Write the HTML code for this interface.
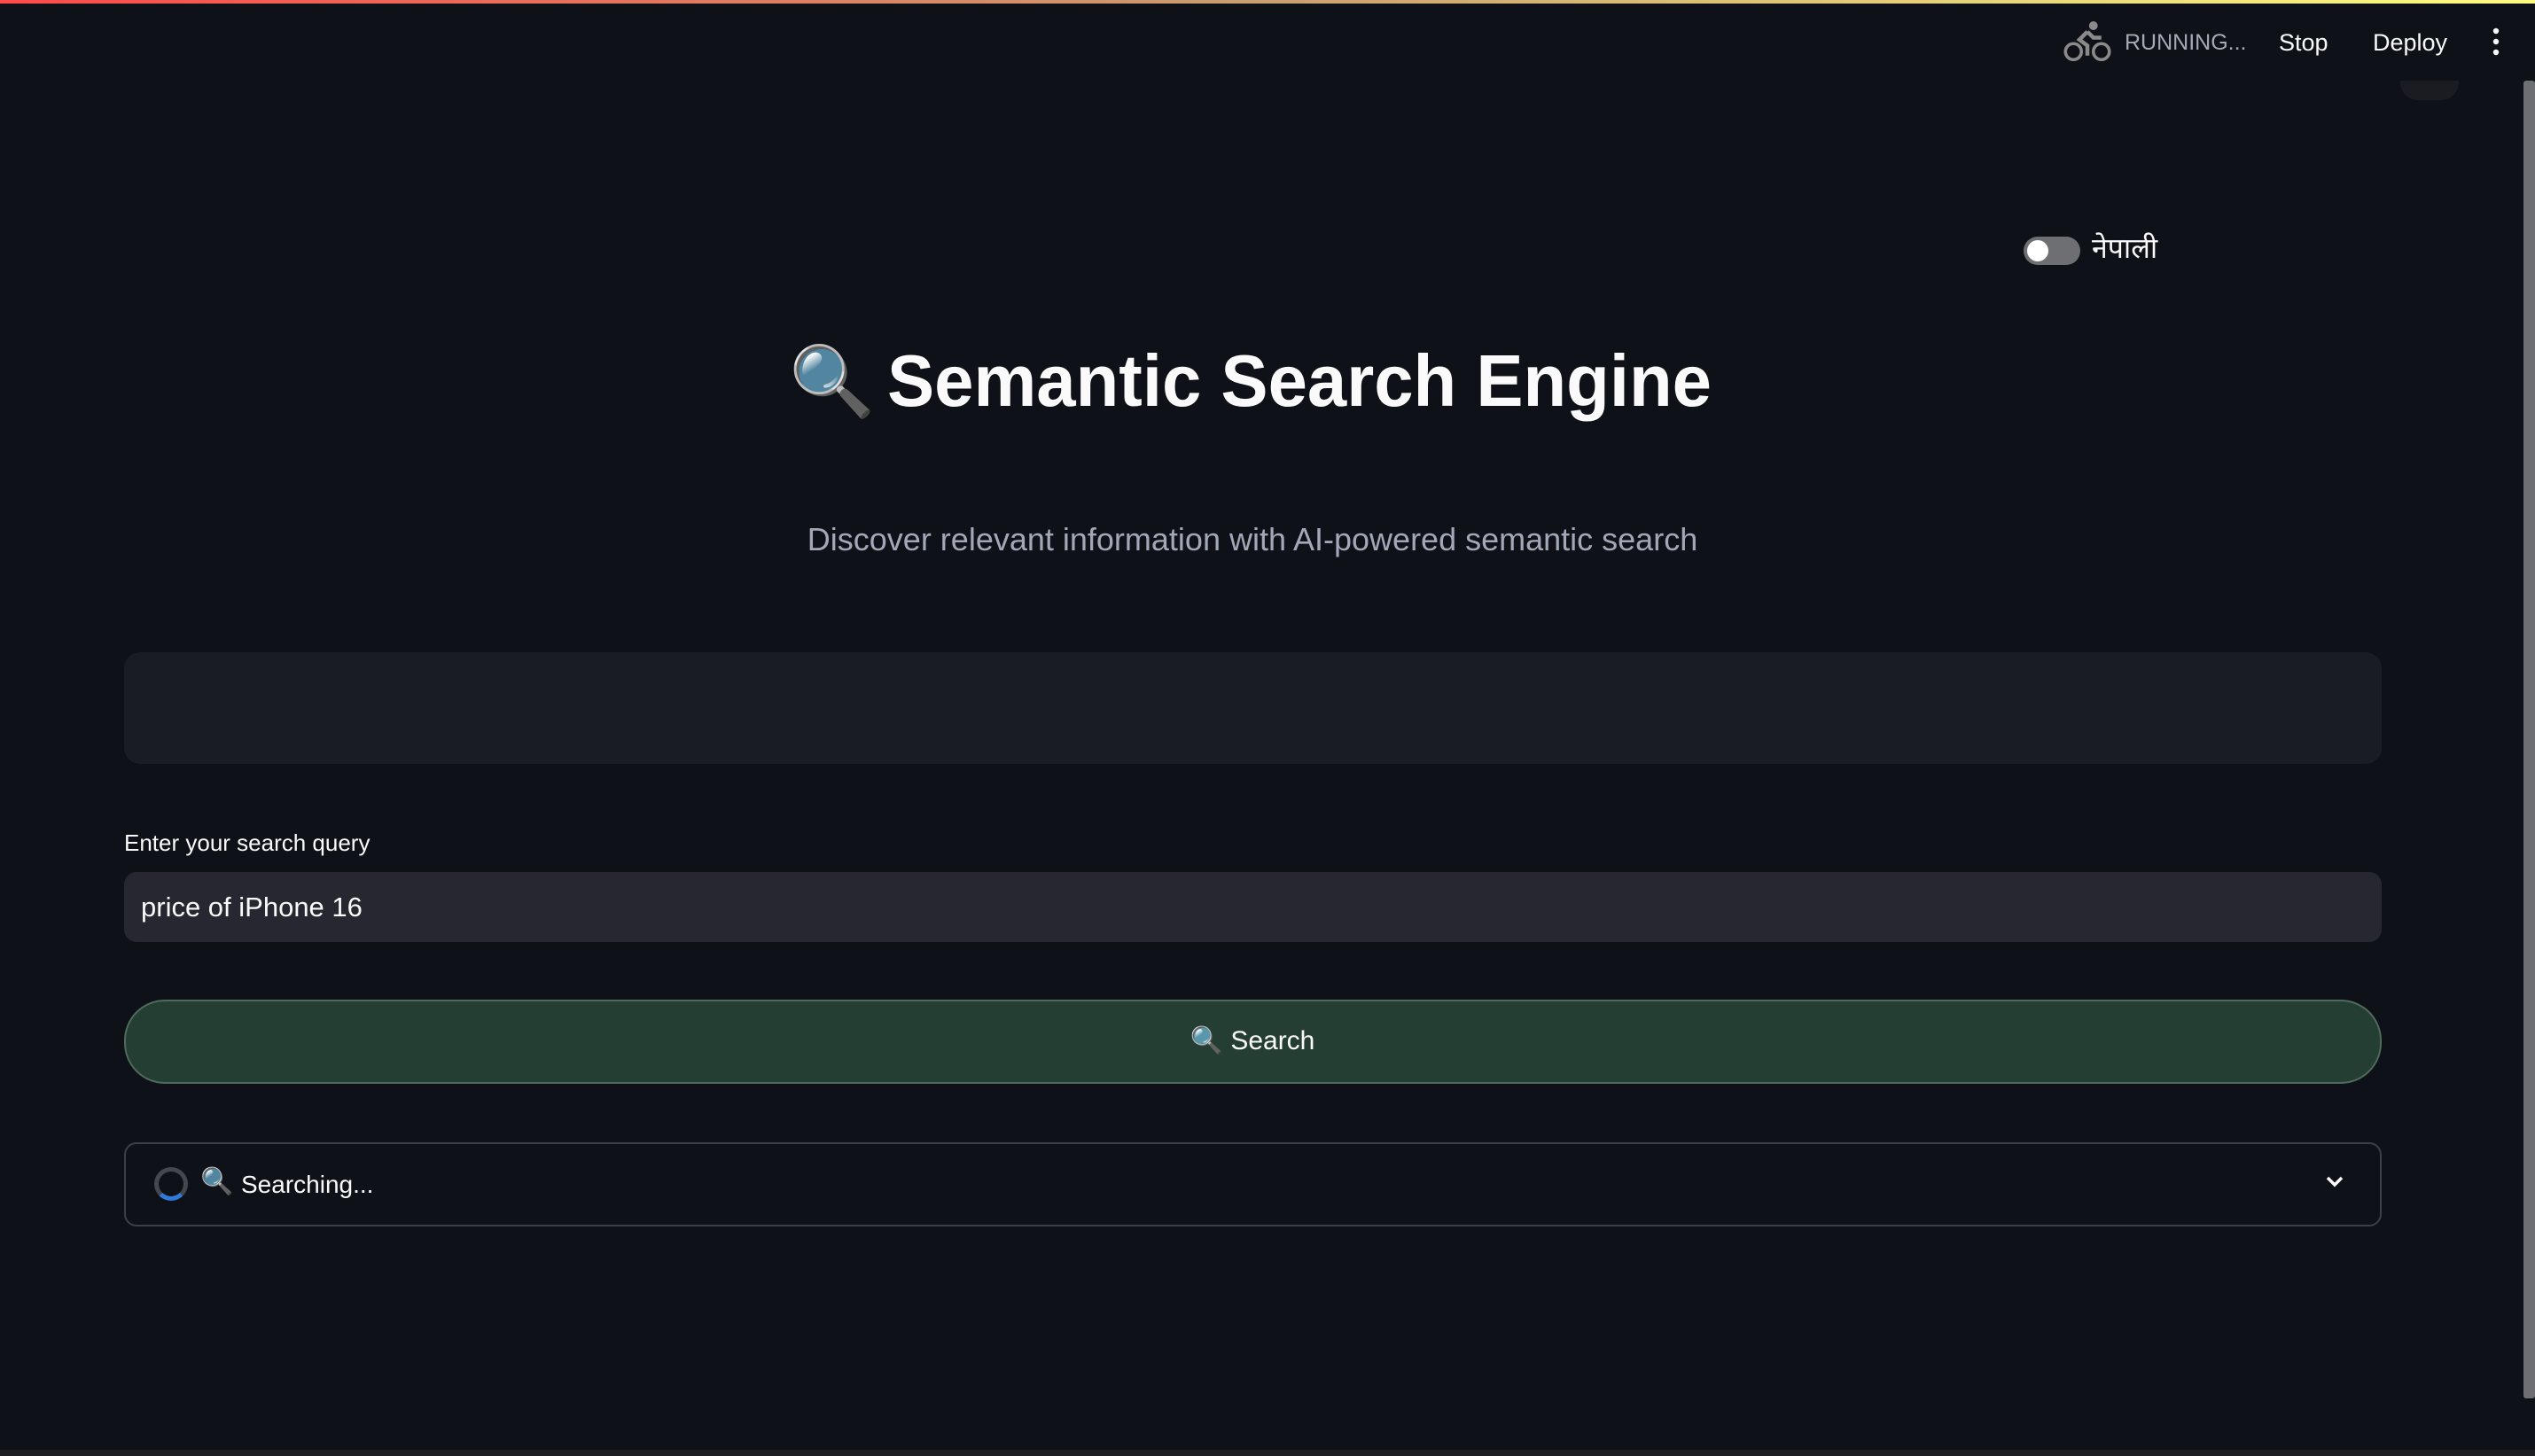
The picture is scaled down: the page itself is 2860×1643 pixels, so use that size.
<!DOCTYPE html>
<html><head><meta charset="utf-8"><style>
html,body{margin:0;padding:0;}
body{width:2860px;height:1643px;background:#0e1117;position:relative;overflow:hidden;font-family:"Liberation Sans","Noto Sans CJK JP",sans-serif;color:#fafafa;}
.abs{position:absolute;}
.topbar{left:0;top:0;width:2860px;height:4px;background:linear-gradient(90deg,#ff4b4b,#c9a070 50%,#fffd80);}
.hdr{top:30px;font-size:27px;line-height:36px;}
.scroll{left:2847px;top:91px;width:13px;height:1487px;background:#6e6f73;border-radius:3px;}
.btm{left:0;top:1636px;width:2860px;height:7px;background:#1c1e24;}
</style></head><body>
<div class="abs topbar"></div>
<svg class="abs" style="left:2328px;top:22px" width="54" height="50" viewBox="0 0 24 22"><g fill="none" stroke="#8a8a8a" stroke-width="1.6"><circle cx="5" cy="16" r="4"/><circle cx="19" cy="16" r="4"/></g><circle cx="15" cy="3" r="2.2" fill="#8a8a8a"/><path d="M12 6 L8 10 L12 13 L12 18 M12 6 L15 9 L19 9" fill="none" stroke="#8a8a8a" stroke-width="2"/></svg>
<div class="abs hdr" style="left:2397px;color:#a6a9b6;font-size:25px">RUNNING...</div>
<div class="abs hdr" style="left:2571px">Stop</div>
<div class="abs hdr" style="left:2677px">Deploy</div>
<svg class="abs" style="left:2808px;top:30px" width="16" height="36"><circle cx="8" cy="5" r="3.2" fill="#fafafa"/><circle cx="8" cy="17" r="3.2" fill="#fafafa"/><circle cx="8" cy="29" r="3.2" fill="#fafafa"/></svg>
<div class="abs" style="left:2708px;top:91px;width:66px;height:22px;background:#1a1c22;border-radius:0 0 20px 20px"></div>
<div class="abs scroll"></div>

<div class="abs" style="left:2283px;top:267px;width:64px;height:32px;border-radius:16px;background:#6e6f73"></div>
<div class="abs" style="left:2287px;top:271px;width:24px;height:24px;border-radius:12px;background:#fff"></div>
<div class="abs" style="left:2360px;top:258px;font-size:32px;line-height:44px;font-family:'Liberation Sans','DejaVu Sans',sans-serif">नेपाली</div>

<div class="abs" style="left:890px;top:380px;font-size:78px;line-height:100px">🔍</div>
<div class="abs" style="left:1001px;top:380px;width:930px;font-size:83px;line-height:100px;font-weight:bold;white-space:nowrap;transform-origin:0 50%;transform:scaleX(0.96)">Semantic Search Engine</div>
<div class="abs" style="left:0;width:2826px;top:586px;text-align:center;font-size:36px;line-height:46px;color:#a3a8b8">Discover relevant information with AI-powered semantic search</div>

<div class="abs" style="left:140px;top:736px;width:2547px;height:126px;background:#1a1c24;border-radius:18px"></div>

<div class="abs" style="left:140px;top:934px;font-size:26px;line-height:34px">Enter your search query</div>
<div class="abs" style="left:140px;top:984px;width:2547px;height:79px;background:#262730;border-radius:14px"></div>
<div class="abs" style="left:159px;top:1003px;font-size:31px;line-height:42px">price of iPhone 16</div>

<div class="abs" style="left:140px;top:1128px;width:2543px;height:91px;background:#243e33;border:2px solid #4f6b5d;border-radius:46px"></div>
<div class="abs" style="left:0;width:2826px;top:1154px;text-align:center;font-size:30px;line-height:42px">🔍 Search</div>

<div class="abs" style="left:140px;top:1289px;width:2543px;height:91px;border:2px solid #3c3f47;border-radius:14px"></div>
<div class="abs" style="border-radius:50%;border:5px solid #45474e;border-bottom-color:#2f7bdc;box-sizing:border-box;width:38px;height:38px;left:174px;top:1317px"></div>
<div class="abs" style="left:226px;top:1314px;font-size:30px;line-height:40px">🔍</div>
<div class="abs" style="left:272px;top:1318px;font-size:28px;line-height:38px">Searching...</div>
<svg class="abs" style="left:2620px;top:1322px" width="28" height="22" viewBox="0 0 28 22"><path d="M6 7 L14 15 L22 7" fill="none" stroke="#fafafa" stroke-width="3.5"/></svg>

<div class="abs btm"></div>
</body></html>
